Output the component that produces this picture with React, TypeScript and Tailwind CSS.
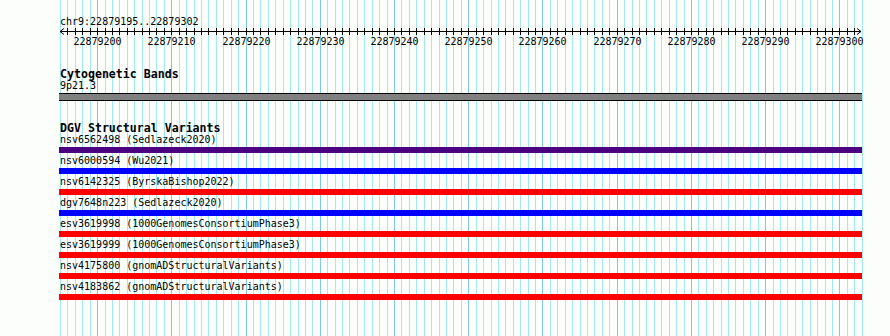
const START = 22879195;
const BASES = 108;
const LEFT = 60;
const PX = 7.423;

const mono = "font-['DejaVu_Sans_Mono','Liberation_Mono',monospace]";

const variants = [
  { name: "nsv6562498 (Sedlazeck2020)", color: "bg-[#4b0082]" },
  { name: "nsv6000594 (Wu2021)", color: "bg-[#0000ff]" },
  { name: "nsv6142325 (ByrskaBishop2022)", color: "bg-[#ff0000]" },
  { name: "dgv7648n223 (Sedlazeck2020)", color: "bg-[#0000ff]" },
  { name: "esv3619998 (1000GenomesConsortiumPhase3)", color: "bg-[#ff0000]" },
  { name: "esv3619999 (1000GenomesConsortiumPhase3)", color: "bg-[#ff0000]" },
  { name: "nsv4175800 (gnomADStructuralVariants)", color: "bg-[#ff0000]" },
  { name: "nsv4183862 (gnomADStructuralVariants)", color: "bg-[#ff0000]" },
];

const baseX = (i: number) => Math.round(LEFT + i * PX) + 0.5;

// Vertical base gridlines behind all tracks
function Grid() {
  const lines = [];
  for (let i = 0; i <= BASES; i++) {
    const major = i % 10 === 5;
    lines.push(
      <line
        key={i}
        x1={baseX(i)}
        x2={baseX(i)}
        y1={0}
        y2={336}
        stroke={major ? "#80c6e6" : "#a2e8ee"}
        strokeWidth={1}
      />,
    );
  }
  return (
    <svg
      className="absolute inset-0"
      width={890}
      height={336}
      shapeRendering="crispEdges"
    >
      {lines}
    </svg>
  );
}

// Scale bar with a tick per base and labels every 10 bases
function Ruler() {
  const off = 59;
  const ticks = [];
  const labels = [];
  for (let i = 1; i < BASES; i++) {
    const x = baseX(i) - off;
    ticks.push(
      <line key={i} x1={x} x2={x} y1={0} y2={7} stroke="#000" />,
    );
    if (i % 10 === 5) {
      labels.push(
        <text
          key={i}
          x={x}
          y={16.5}
          textAnchor="middle"
          fontFamily="'DejaVu Sans Mono', 'Liberation Mono', monospace"
          fontSize={10}
          fill="#000"
        >
          {START + i}
        </text>,
      );
    }
  }
  return (
    <svg width={804} height={20} className="block overflow-visible">
      <g shapeRendering="crispEdges">
        <line x1={1} x2={802} y1={3.5} y2={3.5} stroke="#000" />
        {ticks}
      </g>
      <polyline
        points="5,0.5 1,3.5 5,6.5"
        fill="none"
        stroke="#000"
      />
      <polyline
        points="798,0.5 802,3.5 798,6.5"
        fill="none"
        stroke="#000"
      />
      {labels}
    </svg>
  );
}

export default function App() {
  return (
    <div className="relative h-[336px] w-[890px] overflow-hidden bg-[#fcfefc] text-black">
      <Grid />

      <div className="relative pl-[59px]">
        {/* Location */}
        <div className={`mt-[16px] h-[12px] pl-[1px] text-[10px] leading-[12px] ${mono}`}>
          chr9:22879195..22879302
        </div>
        <Ruler />

        {/* Cytogenetic bands track */}
        <div className={`mt-[20px] h-[12px] pl-[1px] text-[11.6px] font-bold leading-[12px] ${mono}`}>
          Cytogenetic Bands
        </div>
        <div className={`h-[12px] pl-[1px] text-[10px] leading-[12px] ${mono}`}>
          9p21.3
        </div>
        <div className="mt-[1px] h-[8px] w-[803px] border-y border-black bg-[#808080]" />

        {/* DGV track */}
        <div className={`mt-[21px] h-[12px] pl-[1px] text-[11.6px] font-bold leading-[12px] ${mono}`}>
          DGV Structural Variants
        </div>
        <div className="flex flex-col gap-[2px]">
          {variants.map((v) => (
            <div key={v.name}>
              <div className={`h-[13px] pl-[1px] text-[10px] leading-[12px] ${mono}`}>
                {v.name}
              </div>
              <div className={`h-[6px] w-[803px] ${v.color}`} />
            </div>
          ))}
        </div>
      </div>
    </div>
  );
}
